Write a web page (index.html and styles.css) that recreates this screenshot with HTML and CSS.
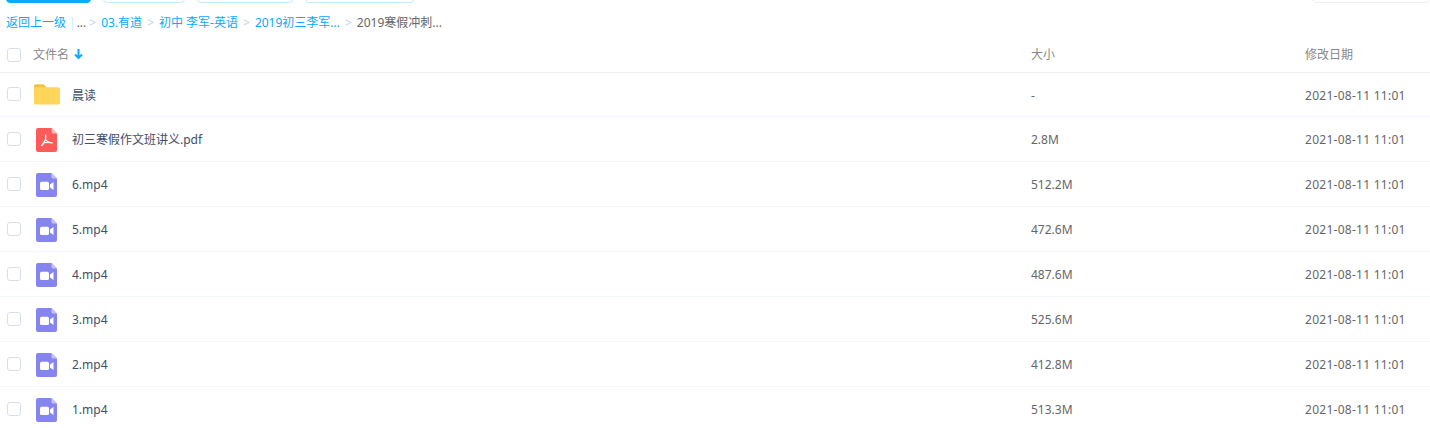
FILE: index.html
```html
<!DOCTYPE html>
<html>
<head>
    <title>文件列表</title>
    <link rel="stylesheet" href="styles.css">
</head>
<body>
    <svg class="defs" width="0" height="0">
        <symbol id="doc-video" viewBox="0 0 21 24">
            <path d="M2 0h13.500L21 5.500V22a2 2 0 0 1-2 2H2a2 2 0 0 1-2-2V2a2 2 0 0 1 2-2z" fill="#8685f0"/>
            <path d="M15.500 0L21 5.500H17a1.500 1.500 0 0 1-1.500-1.500z" fill="#c3c2f8"/>
            <rect x="4" y="8.700" width="9" height="8.300" rx="1.500" fill="#fff"/>
            <path d="M14 11.500l3.500-2.500v8L14 14.500z" fill="#fff"/>
        </symbol>
        <symbol id="doc-pdf" viewBox="0 0 21 24">
            <path d="M2 0h13.500L21 5.500V22a2 2 0 0 1-2 2H2a2 2 0 0 1-2-2V2a2 2 0 0 1 2-2z" fill="#fe5a5a"/>
            <path d="M15.500 0L21 5.500H17a1.500 1.500 0 0 1-1.500-1.500z" fill="#ffb3b3"/>
            <path d="M9.500 6.500c.5 2.500.5 3.500 0 5-.7 2-2 4-4 6.500M9.500 11.500c1 1.500 3.500 3 7 3.500M16.500 15c-3-.8-6.500-1.500-10 .5" fill="none" stroke="#fff" stroke-width="1.300"/>
        </symbol>
    </svg>

    <div class="toolbar">
        <div class="btn btn-primary"></div>
        <div class="btn btn-a"></div>
        <div class="btn btn-b"></div>
        <div class="btn btn-c"></div>
        <div class="btn btn-right"></div>
    </div>

    <div class="crumbs">
        <a>返回上一级</a><span class="bar">|</span><span class="dots">...</span>
        <span class="sep">&gt;</span><a>03.有道</a>
        <span class="sep">&gt;</span><a>初中 李军-英语</a>
        <span class="sep">&gt;</span><a>2019初三李军...</a>
        <span class="sep">&gt;</span><span class="current">2019寒假冲刺...</span>
    </div>

    <div class="row head">
        <span class="check"></span>
        <span class="col-name">文件名
            <svg class="sort" width="9" height="10" viewBox="0 0 9 10"><path d="M4.500 0v8M1 5.500l3.500 3.500 3.500-3.500" fill="none" stroke="#09aaff" stroke-width="2"/></svg>
        </span>
        <span class="col-size">大小</span>
        <span class="col-date">修改日期</span>
    </div>

    <div class="row first">
        <span class="check"></span>
        <span class="icon">
            <svg width="26" height="21" viewBox="0 0 27 21"><path d="M2 0h8l3 3h12a2 2 0 0 1 2 2v14a2 2 0 0 1-2 2H2a2 2 0 0 1-2-2V2a2 2 0 0 1 2-2z" fill="#ffd659"/><path d="M2 0h8l3 3H0V2a2 2 0 0 1 2-2z" fill="#f0bf45"/></svg>
        </span>
        <span class="col-name file">晨读</span>
        <span class="col-size">-</span>
        <span class="col-date">2021-08-11 11:01</span>
    </div>
    <div class="row">
        <span class="check"></span>
        <span class="icon"><svg width="21" height="24"><use href="#doc-pdf"/></svg></span>
        <span class="col-name file">初三寒假作文班讲义.pdf</span>
        <span class="col-size">2.8M</span>
        <span class="col-date">2021-08-11 11:01</span>
    </div>
    <div class="row">
        <span class="check"></span>
        <span class="icon"><svg width="21" height="24"><use href="#doc-video"/></svg></span>
        <span class="col-name file">6.mp4</span>
        <span class="col-size">512.2M</span>
        <span class="col-date">2021-08-11 11:01</span>
    </div>
    <div class="row">
        <span class="check"></span>
        <span class="icon"><svg width="21" height="24"><use href="#doc-video"/></svg></span>
        <span class="col-name file">5.mp4</span>
        <span class="col-size">472.6M</span>
        <span class="col-date">2021-08-11 11:01</span>
    </div>
    <div class="row">
        <span class="check"></span>
        <span class="icon"><svg width="21" height="24"><use href="#doc-video"/></svg></span>
        <span class="col-name file">4.mp4</span>
        <span class="col-size">487.6M</span>
        <span class="col-date">2021-08-11 11:01</span>
    </div>
    <div class="row">
        <span class="check"></span>
        <span class="icon"><svg width="21" height="24"><use href="#doc-video"/></svg></span>
        <span class="col-name file">3.mp4</span>
        <span class="col-size">525.6M</span>
        <span class="col-date">2021-08-11 11:01</span>
    </div>
    <div class="row">
        <span class="check"></span>
        <span class="icon"><svg width="21" height="24"><use href="#doc-video"/></svg></span>
        <span class="col-name file">2.mp4</span>
        <span class="col-size">412.8M</span>
        <span class="col-date">2021-08-11 11:01</span>
    </div>
    <div class="row">
        <span class="check"></span>
        <span class="icon"><svg width="21" height="24"><use href="#doc-video"/></svg></span>
        <span class="col-name file">1.mp4</span>
        <span class="col-size">513.3M</span>
        <span class="col-date">2021-08-11 11:01</span>
    </div>
</body>
</html>
```

FILE: styles.css
```css
html, body {
    height: 428px;
    overflow: hidden;
}

body {
    margin: 0;
    background: white;
    color: #666;
    font-family: "Noto Sans", "Noto Sans CJK SC", sans-serif;
    font-size: 12px;
}

.defs {
    display: block;
}

.toolbar {
    display: flex;
    align-items: flex-end;
    gap: 12px;
    height: 3px;
    overflow: hidden;
    padding-left: 6px;
}

.btn {
    flex: none;
    box-sizing: border-box;
    height: 30px;
    border: 1px solid #c3eaff;
    border-radius: 4px;
}

.btn-primary {
    width: 85px;
    background: #09aaff;
    border-color: #09aaff;
}

.btn-a { width: 82px; }
.btn-b { width: 96px; }
.btn-c { width: 109px; }

.btn-right {
    width: 118px;
    margin-left: auto;
    border-color: #eee;
}

.crumbs {
    display: flex;
    align-items: center;
    height: 18px;
    margin-top: 11px;
    padding-left: 6px;
    line-height: 18px;
    white-space: nowrap;
}

.crumbs a {
    color: #09aaff;
}

.bar {
    margin: 0 2px 0 3px;
    color: #c3eaff;
}

.dots {
    margin-left: -1px;
    margin-right: -2px;
}

.sep {
    margin: 0 5px;
    color: #c5d1e6;
}

.current {
    color: #666;
}

.row {
    display: flex;
    align-items: center;
    box-sizing: border-box;
    height: 45px;
    padding-left: 7px;
    border-bottom: 1px solid #f2f6fd;
}

.head {
    height: 41px;
    padding-top: 4px;
    border-bottom-color: #f1f2f9;
    color: #888;
}

.head .check {
    margin-top: 2px;
}

.first {
    height: 44px;
    padding-bottom: 1px;
}

.first .col-name,
.first .col-size,
.first .col-date {
    margin-top: 2px;
}

.check {
    flex: none;
    box-sizing: border-box;
    width: 14px;
    height: 14px;
    margin-right: 12px;
    border: 1px solid #d8dfe8;
    border-radius: 3px;
    background: white;
}

.icon {
    flex: none;
    display: flex;
    justify-content: center;
    width: 27px;
    margin-top: 2px;
    margin-right: 12px;
}

.first .icon {
    box-sizing: border-box;
    margin-top: 0;
    padding-left: 1px;
}

.icon svg {
    display: block;
}

.col-name {
    flex: 1;
    min-width: 0;
}

.file {
    color: #424e67;
}

.sort {
    margin-left: 2px;
}

.col-size {
    flex: none;
    width: 274px;
}

.col-date {
    flex: none;
    width: 125px;
}

.row:not(.head) .col-date {
    letter-spacing: 0.27px;
}
```
